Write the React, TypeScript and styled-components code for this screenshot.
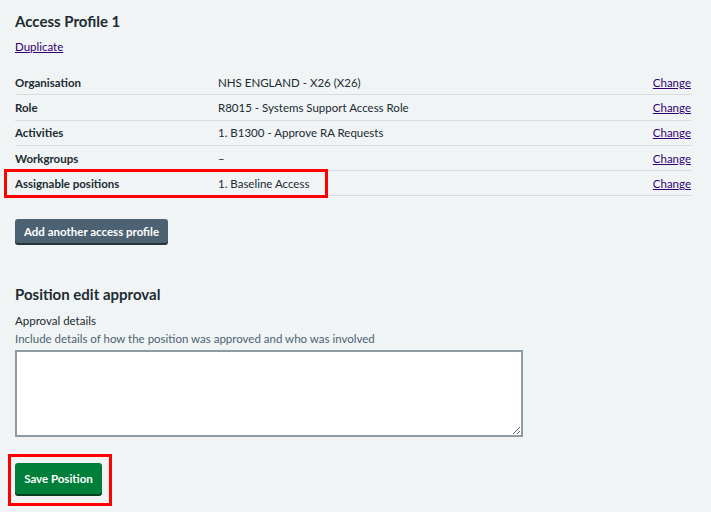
import React from "react";
import styled, { createGlobalStyle } from "styled-components";

const Global = createGlobalStyle`
  html, body { margin: 0; padding: 0; background: #f0f4f5; }
  body { font-family: Lato, "Noto Sans", Arial, sans-serif; color: #212b32; }
  * { box-sizing: border-box; }
`;

const Page = styled.main`
  width: 711px;
  height: 512px;
  padding: 12px 19px 0 15px;
  overflow: hidden;
`;

const Heading = styled.h2`
  margin: 0;
  font-size: 15px;
  line-height: 18px;
  font-weight: 700;
`;

const Link = styled.a`
  color: #330072;
  font-size: 11.5px;
  text-decoration: underline;
  text-underline-offset: 1px;
  cursor: pointer;
`;

const DuplicateWrap = styled.div`
  margin-top: 8px;
  line-height: 14px;
`;

const SummaryList = styled.dl`
  margin: 16px 0 0;
`;

const Row = styled.div`
  position: relative;
  display: grid;
  grid-template-columns: 203px 1fr auto;
  align-items: center;
  height: 25.3px;
  border-bottom: 1px solid #d8dde0;
  font-size: 11.5px;
`;

const Highlight = styled.span`
  position: absolute;
  left: -11px;
  top: -2px;
  width: 324px;
  height: 29px;
  border: 3px solid #f00;
  pointer-events: none;
`;

const Key = styled.dt`
  font-weight: 700;
  margin: 0;
`;

const Value = styled.dd`
  margin: 0;
`;

const Action = styled.dd`
  margin: 0;
  padding-right: 1px;
`;

const Button = styled.button<{ $variant: "secondary" | "primary" }>`
  font-family: inherit;
  font-weight: 700;
  font-size: 11.5px;
  white-space: nowrap;
  padding: 0;
  color: #fff;
  border: none;
  border-radius: 3px;
  cursor: pointer;
  background: ${(p) => (p.$variant === "primary" ? "#007f3b" : "#4c6272")};
  box-shadow: 0 2px 0 ${(p) => (p.$variant === "primary" ? "#00401e" : "#263139")};
`;

const SecondaryButton = styled(Button)`
  margin-top: 23px;
  width: 153px;
  height: 24px;
`;

const Section = styled.section`
  margin-top: 42px;
`;

const Label = styled.label`
  display: block;
  margin-top: 11px;
  font-size: 11.5px;
  line-height: 14px;
`;

const Hint = styled.div`
  margin-top: 4px;
  font-size: 11.5px;
  line-height: 14px;
  color: #4c6272;
`;

const TextArea = styled.textarea`
  display: block;
  margin: 4px 0 0;
  width: 508px;
  height: 87px;
  border: 2px solid #8d9aa2;
  background: #fff;
  border-radius: 0;
  font-family: inherit;
`;

const SaveWrap = styled.div`
  position: relative;
  margin-top: 26px;
  width: 87px;
`;

const SaveHighlight = styled.span`
  position: absolute;
  left: -7px;
  top: -9px;
  width: 104px;
  height: 52px;
  border: 3px solid #f00;
  pointer-events: none;
`;

const SaveButton = styled(Button)`
  width: 87px;
  height: 31px;
  display: block;
`;

const rows = [
  { key: "Organisation", value: "NHS ENGLAND - X26 (X26)" },
  { key: "Role", value: "R8015 - Systems Support Access Role" },
  { key: "Activities", value: "1. B1300 - Approve RA Requests" },
  { key: "Workgroups", value: "–" },
  { key: "Assignable positions", value: "1. Baseline Access", highlight: true },
];

export default function App() {
  return (
    <>
      <Global />
      <Page>
        <Heading>Access Profile 1</Heading>
        <DuplicateWrap>
          <Link>Duplicate</Link>
        </DuplicateWrap>
        <SummaryList>
          {rows.map((r) => (
            <Row key={r.key}>
              {r.highlight && <Highlight />}
              <Key>{r.key}</Key>
              <Value>{r.value}</Value>
              <Action>
                <Link>Change</Link>
              </Action>
            </Row>
          ))}
        </SummaryList>
        <SecondaryButton $variant="secondary">Add another access profile</SecondaryButton>
        <Section>
          <Heading>Position edit approval</Heading>
          <Label htmlFor="approval">Approval details</Label>
          <Hint>Include details of how the position was approved and who was involved</Hint>
          <TextArea id="approval" />
          <SaveWrap>
            <SaveHighlight />
            <SaveButton $variant="primary">Save Position</SaveButton>
          </SaveWrap>
        </Section>
      </Page>
    </>
  );
}
